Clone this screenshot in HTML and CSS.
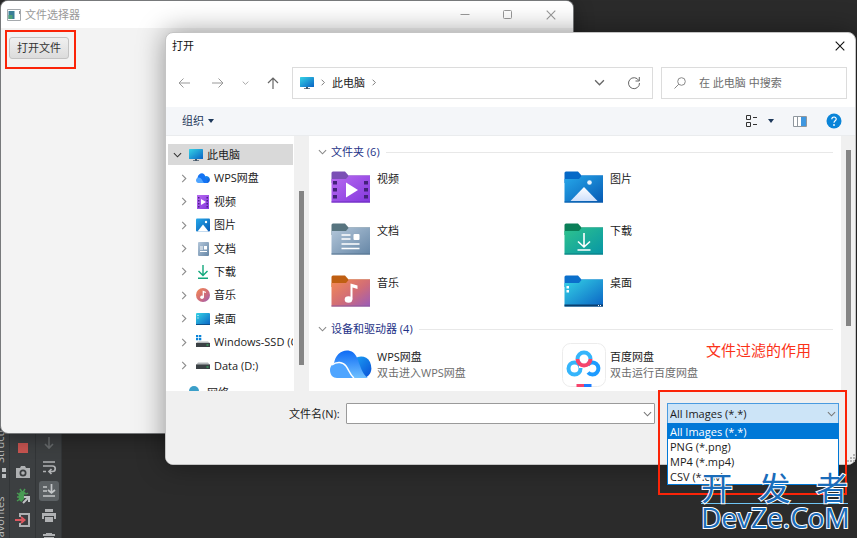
FILE: index.html
```html
<!DOCTYPE html>
<html lang="zh-CN">
<head>
  <meta charset="UTF-8" />
  <meta name="viewport" content="width=device-width, initial-scale=1.0"/>
  <title>文件选择器</title>
  <link rel="stylesheet" href="styles.css">
</head>
<body>

  <!-- Shared icons -->
  <svg class="sprite" aria-hidden="true">
    <defs>
      <linearGradient id="gScreen" x1="0" y1="0" x2="1" y2="1"><stop offset="0" stop-color="#35d3e6"/><stop offset="1" stop-color="#0a63c4"/></linearGradient>
      <linearGradient id="gPurple" x1="0" y1="0" x2="1" y2="1"><stop offset="0" stop-color="#b86af0"/><stop offset="1" stop-color="#8338dd"/></linearGradient>
      <linearGradient id="gSteel" x1="0" y1="0" x2="1" y2="1"><stop offset="0" stop-color="#b4c7da"/><stop offset="1" stop-color="#6586a6"/></linearGradient>
      <linearGradient id="gMusic" x1="0" y1="0" x2="1" y2="1"><stop offset="0" stop-color="#f58b52"/><stop offset=".55" stop-color="#d06c78"/><stop offset="1" stop-color="#9a5cba"/></linearGradient>
      <linearGradient id="gBlue" x1="0" y1="0" x2="1" y2="1"><stop offset="0" stop-color="#27a9ea"/><stop offset="1" stop-color="#0659b4"/></linearGradient>
      <linearGradient id="gGreen" x1="0" y1="0" x2="1" y2="1"><stop offset="0" stop-color="#2fc48d"/><stop offset="1" stop-color="#0795a6"/></linearGradient>
      <linearGradient id="gCloud" x1="0" y1="0" x2="0" y2="1"><stop offset="0" stop-color="#0f6bf5"/><stop offset="1" stop-color="#6fc0ff"/></linearGradient>
      <linearGradient id="gCloudR" x1="0" y1="0" x2="1" y2="1"><stop offset="0" stop-color="#1ba4f5"/><stop offset="1" stop-color="#0a4fd6"/></linearGradient>
      <linearGradient id="gHill" x1="0" y1="0" x2="0" y2="1"><stop offset="0" stop-color="#fff"/><stop offset="1" stop-color="#cfe0fb"/></linearGradient>
    </defs>
    <symbol id="right" viewBox="0 0 8 10"><path d="M2 1l4 4-4 4" fill="none" stroke="currentColor" stroke-width="1.2"/></symbol>
    <symbol id="down" viewBox="0 0 10 8"><path d="M1 2l4 4 4-4" fill="none" stroke="currentColor" stroke-width="1.2"/></symbol>
    <symbol id="close" viewBox="0 0 10 10"><path d="M.7.7l8.6 8.6M9.3.7L.7 9.3" fill="none" stroke="currentColor" stroke-width="1.1"/></symbol>
    <symbol id="pc" viewBox="0 0 14 12"><rect width="14" height="10" rx=".6" fill="url(#gScreen)"/><path d="M6 10h2v1.2h2V12H4v-.8h2z" fill="#46586a"/></symbol>
    <symbol id="cloud" viewBox="0 0 42 28">
      <path d="M25 9c4-4 12-3 15 3 3 7 1 14-6 16H22z" fill="url(#gCloudR)"/>
      <path d="M4 14C5 4 13-1 20 1c5 1 7 6 9 12 2 5 4 12 9 15H8z" fill="url(#gCloud)"/>
      <path d="M0 20c0-6 8-11 14-6 4 3 5 10 9 14H7c-4 0-7-3-7-8z" fill="#4fa5ff"/>
      <path d="M2 15c5-4 11-3 14 1 3 4 4 9 8 12" fill="none" stroke="#fff" stroke-width="1.4"/>
    </symbol>
    <symbol id="cloud-small" viewBox="0 0 14 10">
      <path d="M8.500 3.500c2-1.200 4.500-.3 5.200 2C14.500 8 13 10 11 10H7z" fill="url(#gCloudR)"/>
      <path d="M1.500 5C2 1.500 4.500 0 6.700.400 9 .900 9.500 4 10.500 6.500L12 10H3z" fill="#1473f3"/>
      <path d="M0 7.300C0 5 2.500 3.700 4.700 5.200 6.200 6.300 6.600 8.600 8 10H2.500C1 10 0 8.800 0 7.300z" fill="#4fa5ff"/>
    </symbol>
  </svg>

  <div class="desktop">

    <!-- IDE tool strips at the bottom left -->
    <div class="ide">
      <div class="stripe">
        <span>Structure</span>
        <svg width="10" height="10" viewBox="0 0 10 10" fill="#b8bbbd"><path d="M0 0h4v4H0zM6 0h4v4H6zM0 6h4v4H0zM6 6h4v4H6z"/></svg>
        <span>Favorites</span>
      </div>
      <div class="tools">
        <button aria-label="Stop"><svg width="16" height="16" viewBox="0 0 16 16"><path fill="#c75450" d="M3 3h10v10H3z"/></svg></button>
        <button aria-label="Snapshot"><svg width="16" height="16" viewBox="0 0 16 16"><path fill="#afb1b3" fill-rule="evenodd" d="M1 4h4l1-2h4l1 2h4v10H1zM8 5.500a3.500 3.500 0 1 0 0 7 3.500 3.500 0 0 0 0-7z"/><circle cx="8" cy="9" r="1.800" fill="#afb1b3"/></svg></button>
        <button aria-label="Debug"><svg width="16" height="16" viewBox="0 0 16 16"><path d="M2 5l3 2M2 9h3M2 13l3-2M5 1l2 3M10 1L8 4M13 5l-3 2" stroke="#499c54" stroke-width="1.500"/><ellipse cx="7.500" cy="8.500" rx="4" ry="5.500" fill="#499c54"/><path d="M8 15l5-5M9 8.500h5.500V14" fill="none" stroke="#3c3f41" stroke-width="4"/><path d="M8 15l5-5M9 9h5v5" fill="none" stroke="#c0c3c5" stroke-width="2"/></svg></button>
        <button aria-label="Exit"><svg width="16" height="16" viewBox="0 0 16 16"><path d="M5 5V2h9v12H5v-3" fill="none" stroke="#afb1b3" stroke-width="2"/><path d="M0 8h9M6 5l3.500 3L6 11" fill="none" stroke="#db5860" stroke-width="2"/></svg></button>
      </div>
      <div class="tools console">
        <button aria-label="Down"><svg width="16" height="16" viewBox="0 0 16 16"><path d="M8 2v11M4 9l4 4 4-4" fill="none" stroke="#66696b" stroke-width="1.600"/></svg></button>
        <button aria-label="Soft wrap"><svg width="16" height="16" viewBox="0 0 16 16"><path d="M2 3h12M2 7h9.500a2.700 2.700 0 0 1 0 5.500H8M10.500 10L8 12.500l2.500 2.500M2 12.500h3" fill="none" stroke="#afb1b3" stroke-width="1.700"/></svg></button>
        <button class="on" aria-label="Scroll to end"><svg width="16" height="16" viewBox="0 0 16 16"><path d="M2 4h4M2 8h4M2 13h12M10.500 1v9M7 7l3.500 3L14 7" fill="none" stroke="#c3c6c8" stroke-width="1.700"/></svg></button>
        <button aria-label="Print"><svg width="16" height="16" viewBox="0 0 16 16"><path fill="#afb1b3" d="M4 2h8v3H4zM1 6h14v6h-2V9H3v3H1zM4 10h8v5H4z"/></svg></button>
        <button aria-label="Clear"><svg width="16" height="16" viewBox="0 0 16 16"><path fill="#afb1b3" d="M5 2h6v1h3v2H2V3h3zM3 6h10v9H3z"/></svg></button>
      </div>
    </div>

    <!-- Application window -->
    <section class="window">
      <header class="window-title">
        <svg width="14" height="12" viewBox="0 0 14 12"><path fill="#fff" stroke="#a5a9ad" d="M.5.500h13v11H.5z"/><path fill="#3a7f97" d="M1.500 2h6v8h-6z"/><path fill="#4fa07a" d="M1.500 6h4v4h-4z"/><path fill="#8a8f94" d="M12 2h1v3h-1z"/></svg>
        <h1>文件选择器</h1>
        <div class="window-buttons">
          <button aria-label="最小化"><svg width="10" height="10" viewBox="0 0 10 10"><path d="M.5 4.500h9" stroke="currentColor"/></svg></button>
          <button aria-label="最大化"><svg width="10" height="10" viewBox="0 0 10 10"><rect x=".5" y=".5" width="8" height="8" rx="1" fill="none" stroke="currentColor"/></svg></button>
          <button aria-label="关闭"><svg width="10" height="10"><use href="#close"/></svg></button>
        </div>
      </header>
      <div class="window-body">
        <button class="open-file">打开文件</button>
      </div>
    </section>

    <!-- Open dialog -->
    <section class="dialog">
      <header class="dialog-title">
        <h2>打开</h2>
        <button aria-label="关闭"><svg width="10" height="10"><use href="#close"/></svg></button>
      </header>

      <div class="nav-row">
        <div class="history">
          <button class="dim" aria-label="后退"><svg width="14" height="12" viewBox="0 0 14 12"><path d="M12 6H1M5.500 1.500L1 6l4.500 4.500" fill="none" stroke="currentColor"/></svg></button>
          <button class="dim" aria-label="前进"><svg width="14" height="12" viewBox="0 0 14 12"><path d="M2 6h11M8.500 1.500L13 6l-4.500 4.500" fill="none" stroke="currentColor"/></svg></button>
          <button class="dim" aria-label="最近"><svg width="7" height="6"><use href="#down"/></svg></button>
          <button aria-label="上移"><svg width="12" height="12" viewBox="0 0 12 12"><path d="M6 12V1M1 6l5-5 5 5" fill="none" stroke="currentColor" stroke-width="1.200"/></svg></button>
        </div>
        <div class="address">
          <svg width="14" height="12"><use href="#pc"/></svg>
          <svg width="6" height="7"><use href="#right"/></svg>
          <a href="#">此电脑</a>
          <svg width="6" height="7"><use href="#right"/></svg>
          <button class="address-drop" aria-label="历史"><svg width="11" height="9"><use href="#down"/></svg></button>
          <button aria-label="刷新"><svg width="14" height="14" viewBox="0 0 14 14"><path d="M11.800 4.500A5.500 5.500 0 1 0 12.500 7M12.300 1v4H8.500" fill="none" stroke="currentColor"/></svg></button>
        </div>
        <label class="search">
          <svg width="12" height="12" viewBox="0 0 12 12"><circle cx="7.500" cy="4.500" r="3.800" fill="none" stroke="currentColor"/><path d="M4.800 7.200L.5 11.500" stroke="currentColor"/></svg>
          <input type="text" aria-label="搜索" placeholder="在 此电脑 中搜索">
        </label>
      </div>

      <div class="toolbar">
        <button class="organize">组织 <i class="caret"></i></button>
        <button aria-label="视图" class="view">
          <svg width="13" height="13" viewBox="0 0 13 13"><path d="M1.500.500h4v4h-4zM1.500 7.500h4v4h-4zM8 2.500h4M8 9.500h4" fill="none" stroke="#333"/></svg>
          <i class="caret"></i>
        </button>
        <button aria-label="预览窗格"><svg width="14" height="11" viewBox="0 0 14 11"><path d="M.5.500h13v10H.5zM4.500 1v9" fill="#fff" stroke="#8f979e"/><path fill="#3f97e0" d="M8 1h5v9H8z"/></svg></button>
        <button aria-label="帮助"><svg width="16" height="16" viewBox="0 0 16 16"><circle cx="8" cy="8" r="7.500" fill="#0a84d8"/><path d="M5.800 6.200c0-3 4.600-2.800 4.400 0C10.100 7.700 8 7.800 8 9.700" fill="none" stroke="#fff" stroke-width="1.200"/><circle cx="8" cy="12" r=".9" fill="#fff"/></svg></button>
      </div>

      <div class="panes">
        <nav class="tree">
          <ul>
            <li class="root current"><button aria-label="折叠"><svg width="9" height="8"><use href="#down"/></svg></button><svg width="14" height="12"><use href="#pc"/></svg><a href="#">此电脑</a></li>
            <li><button aria-label="展开"><svg width="8" height="9"><use href="#right"/></svg></button><svg width="14" height="10"><use href="#cloud-small"/></svg><a href="#">WPS网盘</a></li>
            <li><button aria-label="展开"><svg width="8" height="9"><use href="#right"/></svg></button><svg width="14" height="14" viewBox="0 0 14 14"><path fill="url(#gPurple)" d="M1 0h12v14H1z"/><path fill="#4b2388" d="M2 2h1.500v1.500H2zM2 5h1.500v1.500H2zM2 8h1.500v1.500H2zM2 11h1.500v1.500H2zM10.500 2H12v1.500h-1.500zM10.500 5H12v1.500h-1.500zM10.500 8H12v1.500h-1.500zM10.500 11H12v1.500h-1.500z"/><path fill="#fff" d="M5 4l5 3-5 3z"/></svg><a href="#">视频</a></li>
            <li><button aria-label="展开"><svg width="8" height="9"><use href="#right"/></svg></button><svg width="14" height="14" viewBox="0 0 14 14"><rect y=".5" width="14" height="13" rx="1" fill="url(#gBlue)"/><path fill="#fff" d="M1.500 13.500L7 6.500l5.500 7z"/><circle cx="10" cy="4" r="1.200" fill="#fff"/></svg><a href="#">图片</a></li>
            <li><button aria-label="展开"><svg width="8" height="9"><use href="#right"/></svg></button><svg width="14" height="14" viewBox="0 0 14 14"><rect x="2" width="11" height="14" rx="1" fill="url(#gSteel)"/><path d="M4 5h3M4 7h3M4 9.500h7" stroke="#fff"/><path fill="#fff" d="M8 4h3v3.500H8z"/></svg><a href="#">文档</a></li>
            <li><button aria-label="展开"><svg width="8" height="9"><use href="#right"/></svg></button><svg width="14" height="14" viewBox="0 0 14 14"><path d="M7 0v10M2.500 6L7 10.500 11.500 6M2 13.300h10" fill="none" stroke="#13a87c" stroke-width="1.400"/></svg><a href="#">下载</a></li>
            <li><button aria-label="展开"><svg width="8" height="9"><use href="#right"/></svg></button><svg width="14" height="14" viewBox="0 0 14 14"><circle cx="7" cy="7" r="7" fill="url(#gMusic)"/><circle cx="6" cy="9.300" r="1.800" fill="#fff"/><path d="M7.300 9.300V3.500l2.500 1" fill="none" stroke="#fff" stroke-width="1.300"/></svg><a href="#">音乐</a></li>
            <li><button aria-label="展开"><svg width="8" height="9"><use href="#right"/></svg></button><svg width="14" height="12" viewBox="0 0 14 12"><rect width="14" height="12" rx="1" fill="url(#gScreen)"/><path fill="#fff" d="M1.500 2h1v1h-1zM1.500 4.500h1v1h-1z"/><path fill="#0b4f8a" d="M0 11h14v1H0z"/></svg><a href="#">桌面</a></li>
            <li><button aria-label="展开"><svg width="8" height="9"><use href="#right"/></svg></button><svg width="14" height="14" viewBox="0 0 14 14"><path fill="#0a84d8" d="M0 0h2.300v2.300H0zM3 0h2.300v2.300H3zM0 3h2.300v2.300H0zM3 3h2.300v2.300H3z"/><path fill="#b3b7ba" d="M2 6.500h10L14 8H0z"/><path fill="#3b4145" d="M0 8h14v4H0z"/><path fill="#39d06a" d="M10.500 9.500h2v1h-2z"/></svg><a href="#">Windows-SSD (C:)</a></li>
            <li><button aria-label="展开"><svg width="8" height="9"><use href="#right"/></svg></button><svg width="14" height="8" viewBox="0 0 14 8"><path fill="#b3b7ba" d="M2 .5h10L14 3H0z"/><path fill="#3b4145" d="M0 2.500h14v4.500H0z"/><path fill="#39d06a" d="M10.500 4.500h2v1h-2z"/></svg><a href="#">Data (D:)</a></li>
            <li class="root network"><button aria-label="展开"></button><svg width="14" height="14" viewBox="0 0 14 14"><circle cx="5" cy="5" r="5" fill="#3b9fc9"/><path fill="#2a6f9c" d="M4 6h10v7H4z"/></svg><a href="#">网络</a></li>
          </ul>
          <div class="track"><div class="thumb tree-thumb"></div></div>
        </nav>

        <div class="files">
          <div class="list">
            <h3><svg width="9" height="8"><use href="#down"/></svg>文件夹 (6)</h3>
            <div class="grid">
              <a class="item" href="#">
                <svg width="40" height="32" viewBox="0 0 40 32"><path fill="#7b4fb5" d="M.5 2q0-1.500 1.500-1.500h12l3.500 4H39V12H.5z"/><path fill="url(#gPurple)" d="M.5 8h14.500l3-3.500H39v27H.5z"/><path fill="#6a2bbd" d="M.5 30.500H39v1H.5z"/><path fill="#43207a" d="M2 10h4v3.500H2zM2 17h4v3.500H2zM2 24h4v3.500H2zM33 10h4v3.500h-4zM33 17h4v3.500h-4zM33 24h4v3.500h-4z"/><path fill="#fff" d="M15 11.500L27 19l-12 7.500z"/></svg>
                <span class="name">视频</span>
              </a>
              <a class="item" href="#">
                <svg width="40" height="32" viewBox="0 0 40 32"><path fill="#0569c7" d="M.5 2q0-1.500 1.500-1.500h12l3.500 4H39V12H.5z"/><path fill="url(#gBlue)" d="M.5 8h14.500l3-3.500H39v27H.5z"/><path fill="url(#gHill)" d="M6.500 30L20 16l13.500 14z"/><circle cx="25.500" cy="11.500" r="2.300" fill="#e8f4ff"/><path fill="#0a5aa8" d="M.5 30.500H39v1H.5z"/></svg>
                <span class="name">图片</span>
              </a>
              <a class="item" href="#">
                <svg width="40" height="32" viewBox="0 0 40 32"><path fill="#57747f" d="M.5 2q0-1.500 1.500-1.500h12l3.500 4H39V12H.5z"/><path fill="url(#gSteel)" d="M.5 8h14.500l3-3.500H39v27H.5z"/><path fill="#56758f" d="M.5 30.500H39v1H.5z"/><path d="M10.500 12h9M10.500 16h9M10.500 21h18M10.500 25.500h18" stroke="#fff" stroke-width="1.600"/><rect x="22.500" y="11" width="6" height="6" rx="1" fill="#fff"/></svg>
                <span class="name">文档</span>
              </a>
              <a class="item" href="#">
                <svg width="40" height="32" viewBox="0 0 40 32"><path fill="#0a7f58" d="M.5 2q0-1.500 1.500-1.500h12l3.500 4H39V12H.5z"/><path fill="url(#gGreen)" d="M.5 8h14.500l3-3.500H39v27H.5z"/><path fill="#087a80" d="M.5 30.500H39v1H.5z"/><path d="M20 10v14M14 18.500l6 5.500 6-5.500M13.500 27h13" fill="none" stroke="#fff" stroke-width="1.600"/></svg>
                <span class="name">下载</span>
              </a>
              <a class="item" href="#">
                <svg width="40" height="32" viewBox="0 0 40 32"><path fill="#bf5f12" d="M.5 2q0-1.500 1.500-1.500h12l3.500 4H39V12H.5z"/><path fill="url(#gMusic)" d="M.5 8h14.500l3-3.500H39v27H.5z"/><path fill="#8b5a9b" d="M.5 30.500H39v1H.5z"/><ellipse cx="17.500" cy="24.500" rx="3.800" ry="3.300" fill="#fff"/><path fill="#fff" d="M19.500 8.500l7 2v3.500l-5-1.500v12h-2z"/></svg>
                <span class="name">音乐</span>
              </a>
              <a class="item" href="#">
                <svg width="40" height="32" viewBox="0 0 40 32"><path fill="#0b6fcb" d="M.5 2q0-1.500 1.500-1.500h12l3.500 4H39V12H.5z"/><path fill="url(#gScreen)" d="M.5 8h14.500l3-3.500H39v27H.5z"/><path fill="#0a3f6e" d="M.5 29.500H39v2H.5z"/><path fill="#fff" d="M2.500 11h2.500v2.500H2.500zM2.500 15h2.500v2.500H2.500zM34 30h1v1h-1zM36 30h1v1h-1z"/></svg>
                <span class="name">桌面</span>
              </a>
            </div>
            <h3><svg width="9" height="8"><use href="#down"/></svg>设备和驱动器 (4)</h3>
            <div class="grid">
              <a class="item drive" href="#">
                <svg width="44" height="44" viewBox="-1 -7 44 44"><use href="#cloud" width="42" height="28"/></svg>
                <span class="name">WPS网盘<small>双击进入WPS网盘</small></span>
              </a>
              <a class="item drive" href="#">
                <svg width="44" height="44" viewBox="0 0 44 44"><rect x=".5" y=".5" width="43" height="43" rx="8" fill="#fff" stroke="#ececec"/><g fill="none" stroke-width="4"><path d="M14.500 20.500L18 18M29.500 20.500L26 18" stroke="#2fb0fb"/><circle cx="12.500" cy="25.500" r="6" stroke="#35b5fb"/><path d="M26 29.500a6 6 0 1 0-.5-7.500" stroke="#1d9bff"/><path d="M17 24l9 0" stroke="#fff" stroke-width="2"/><path d="M15.500 16a6.500 6.500 0 0 1 13 0" stroke="#35b5fb"/><path d="M15.500 16a6.500 6.500 0 0 0 13 0" stroke="#f6446c"/></g><path fill="#f6446c" d="M14.500 41H22v3h-7.500z"/><path fill="#1d7cff" d="M22 41h7.500v3H22z"/></svg>
                <span class="name">百度网盘<small>双击运行百度网盘</small></span>
              </a>
            </div>
          </div>
          <div class="track"><div class="thumb files-thumb"></div></div>
        </div>
      </div>

      <footer class="dialog-footer">
        <label for="filename">文件名(N):</label>
        <div class="combo">
          <input type="text" id="filename">
          <svg width="9" height="8"><use href="#down"/></svg>
        </div>
        <div class="combo filter">
          <select aria-label="文件类型">
            <option>All Images (*.*)</option>
          </select>
          <svg width="9" height="8"><use href="#down"/></svg>
          <select class="filter-list" size="4" aria-label="文件类型列表">
            <option selected>All Images (*.*)</option>
            <option>PNG (*.png)</option>
            <option>MP4 (*.mp4)</option>
            <option>CSV (*.csv)</option>
          </select>
        </div>
        <svg class="grip" width="8" height="8" viewBox="0 0 8 8" fill="#b5b5b5"><path d="M6 0h2v2H6zM3 3h2v2H3zM6 3h2v2H6zM0 6h2v2H0zM3 6h2v2H3zM6 6h2v2H6z"/></svg>
      </footer>
    </section>

    <!-- Notes drawn over the windows -->
    <div class="mark mark-button"></div>
    <div class="mark mark-filter"></div>
    <p class="note">文件过滤的作用</p>
    <div class="watermark">
      <div class="watermark-cn"><span>开</span><span>发</span><span>者</span></div>
      <div class="watermark-en">DevZe.CoM</div>
    </div>
  </div>

</body>
</html>
```
FILE: styles.css
```css
* {
  box-sizing: border-box;
}

body {
  margin: 0;
  font-family: "Open Sans", "Noto Sans CJK SC", sans-serif;
  font-size: 11px;
  line-height: 16px;
  color: #1b1b1b;
}

h1, h2, h3, p, ul {
  margin: 0;
  padding: 0;
  font-size: 11px;
  font-weight: normal;
}

a {
  color: inherit;
  text-decoration: none;
}

button, input, select {
  font: inherit;
  color: inherit;
  margin: 0;
  padding: 0;
  border: none;
  background: none;
  outline: none;
}

svg {
  display: block;
  flex: none;
}

.sprite {
  position: absolute;
  width: 0;
  height: 0;
}

.desktop {
  position: relative;
  height: 100vh;
  overflow: hidden;
  background: #2b2b2b;
}

/* IDE strips */
.ide {
  position: absolute;
  left: 0;
  top: 420px;
  bottom: 0;
  display: flex;
  overflow: hidden;
  background: #3c3f41;
}

.stripe {
  width: 10px;
  border-right: 1px solid #323537;
  display: flex;
  flex-direction: column;
  align-items: flex-end;
  gap: 5px;
  padding-right: 3px;
  color: #bbb;
}

.stripe span {
  writing-mode: vertical-rl;
  transform: rotate(180deg);
  height: 43px;
  line-height: 12px;
  flex: none;
}

.stripe span + svg + span {
  margin-top: 10px;
  height: 50px;
}

.tools {
  display: flex;
  flex-direction: column;
  align-items: center;
  gap: 4px;
  width: 26px;
  padding-top: 18px;
  border-right: 1px solid #323537;
}

.tools button {
  display: flex;
  padding: 2px;
  border-radius: 3px;
}

.tools.console {
  padding-top: 13px;
}

.tools .on {
  background: #5c6164;
}

/* Application window */
.window {
  position: absolute;
  left: 1px;
  top: 1px;
  width: 572px;
  height: 432px;
  border-radius: 7px;
  overflow: hidden;
  background: #f3f3f3;
  box-shadow: 0 0 0 1px #77797b, 0 4px 20px rgba(0, 0, 0, 0.4);
}

.window-title {
  display: flex;
  align-items: center;
  height: 27px;
  padding: 0 17px 0 6px;
  gap: 4px;
  background: #fff;
  color: #999;
}

.window-buttons {
  display: flex;
  gap: 33px;
  margin-left: auto;
}

.window-body {
  padding: 9px 8px;
}

.open-file {
  height: 22px;
  padding: 0 7px;
  border: 1px solid #c3c3c3;
  border-radius: 3px;
  background: linear-gradient(#f0f0f0, #dcdcdc);
  color: #333;
  line-height: 20px;
}

/* Open dialog */
.dialog {
  position: absolute;
  left: 165px;
  right: 1px;
  top: 32px;
  bottom: 73px;
  display: flex;
  flex-direction: column;
  border: 1px solid #c4c4c4;
  border-radius: 8px;
  background: #fff;
  box-shadow: 0 0 28px rgba(0, 0, 0, 0.4);
}

.dialog-title {
  display: flex;
  align-items: center;
  justify-content: space-between;
  height: 25px;
  padding: 0 10px 0 6px;
  color: #111;
}

.nav-row {
  display: flex;
  align-items: center;
  gap: 8px;
  height: 49px;
  padding: 0 8px 0 12px;
  color: #666;
}

.history {
  display: flex;
  align-items: center;
  gap: 18px;
  width: 106px;
}

.history .dim {
  color: #999;
}

.address, .search {
  display: flex;
  align-items: center;
  height: 32px;
  border: 1px solid #dcdcdc;
}

.address {
  flex: 1;
  gap: 6px;
  padding: 0 11px 0 7px;
}

.address a {
  color: #1b1b1b;
}

.address-drop {
  margin: 0 16px 0 auto;
}

.search {
  width: 186px;
  padding: 0 12px;
  gap: 13px;
  color: #888;
}

.search input {
  flex: 1;
  min-width: 0;
}

.search input::placeholder {
  color: #6d6d6d;
  opacity: 1;
}

.toolbar {
  display: flex;
  align-items: center;
  gap: 19px;
  height: 29px;
  padding: 0 13px 0 16px;
  background: #f4f6f9;
  border-bottom: 1px solid #eaecee;
  color: #1e395b;
}

.organize {
  display: flex;
  align-items: center;
  gap: 4px;
  margin-right: auto;
}

.view {
  display: flex;
  align-items: center;
  gap: 10px;
}

.caret {
  border: 3px solid transparent;
  border-top: 4px solid #1e395b;
  border-bottom: none;
}

.panes {
  flex: 1;
  min-height: 0;
  display: flex;
  overflow: hidden;
}

.tree {
  flex: none;
  display: flex;
  width: 142px;
  padding-left: 2px;
}

.tree ul {
  flex: 1;
  min-width: 0;
  display: grid;
  grid-auto-rows: 1fr;
  height: 258px;
  margin-top: 7px;
  list-style: none;
}

.tree li {
  display: flex;
  align-items: center;
  gap: 4px;
  padding-left: 12px;
  overflow: hidden;
  white-space: nowrap;
}

.tree li button {
  flex: none;
  width: 12px;
  color: #8c8c8c;
}

.tree .root {
  padding-left: 5px;
}

.tree .root button {
  color: #333;
}

.tree .current {
  margin: 1px 0;
  background: #d9d9d9;
}

.tree .network {
  padding-top: 7px;
}

.track {
  flex: none;
  width: 14px;
  margin-left: 1px;
  padding-left: 5px;
  background: #f0f0f0;
}

.thumb {
  width: 5px;
  background: #858585;
}

.tree-thumb {
  height: 174px;
  margin-top: 55px;
}

.files-thumb {
  height: 176px;
  margin-top: 14px;
}

.files {
  flex: 1;
  display: flex;
  border-left: 1px solid #f0f0f0;
}

.list {
  flex: 1;
  padding: 8px 7px 0 9px;
}

.list h3 {
  display: flex;
  align-items: center;
  gap: 4px;
  color: #1e3287;
}

.list h3 svg {
  color: #888;
}

.list h3::after {
  content: "";
  flex: 1;
  height: 1px;
  margin-left: 2px;
  background: #e8e8e8;
}

.grid {
  display: grid;
  grid-template-columns: repeat(auto-fill, 233px);
  padding-left: 13px;
}

.item {
  display: flex;
  gap: 6px;
  height: 52px;
  padding-top: 11px;
}

.grid + h3 {
  margin-top: 5px;
}

.drive {
  gap: 4px;
  margin-left: -2px;
  padding-top: 6px;
}

.name {
  display: block;
}

.drive .name {
  padding-top: 6px;
}

.name small {
  display: block;
  font-size: 11px;
  color: #6d6d6d;
}

.dialog-footer {
  position: relative;
  display: flex;
  align-items: flex-start;
  height: 73px;
  padding: 12px 16px 0 123px;
  border-radius: 0 0 7px 7px;
  background: #f0f0f0;
  line-height: 21px;
}

.grip {
  position: absolute;
  right: 0;
  bottom: 2px;
}

.combo {
  position: relative;
  flex: 1;
  margin-left: 6px;
}

.combo input {
  display: block;
  width: 100%;
  height: 21px;
  padding: 0 20px 0 4px;
  border: 1px solid #9a9a9a;
  border-radius: 1px;
  background: #fff;
}

.combo svg {
  position: absolute;
  right: 3px;
  top: 7px;
  color: #777;
}

.filter {
  flex: none;
  width: 172px;
  margin-left: 12px;
}

.filter select {
  display: block;
  appearance: none;
  width: 100%;
  height: 21px;
  padding: 0 2px;
  border: 1px solid #4a9be0;
  border-radius: 0;
  background: #cce4f7;
  line-height: 19px;
}

.filter .filter-list {
  position: absolute;
  left: 0;
  top: 20px;
  height: 62px;
  padding: 0;
  overflow: hidden;
  border-color: #0078d7;
  background: #fff;
}

.filter-list option {
  height: 15px;
  min-height: 15px;
  padding: 0 2px;
  line-height: 15px;
}

.filter-list option:checked {
  background: #0078d7;
  color: #fff;
}

/* Notes */
.mark {
  position: absolute;
  border: 2px solid #fb2408;
}

.mark-button {
  left: 5px;
  top: 30px;
  width: 71px;
  height: 39px;
}

.mark-filter {
  right: 10px;
  bottom: 43px;
  width: 189px;
  height: 105px;
}

.note {
  position: absolute;
  right: 46px;
  top: 340px;
  font-size: 15px;
  line-height: 21px;
  color: #fb3218;
}

.watermark {
  position: absolute;
  right: 9px;
  bottom: 8px;
  width: 147px;
  color: #1a6cba;
  font-size: 28px;
  line-height: 26px;
  -webkit-text-stroke: 2px #fff;
  paint-order: stroke fill;
}

.watermark-cn {
  display: flex;
  justify-content: space-between;
  font-size: 32px;
  line-height: 30px;
  border-bottom: 1px solid #6fc5f5;
}

.watermark-en {
  white-space: nowrap;
}
```
